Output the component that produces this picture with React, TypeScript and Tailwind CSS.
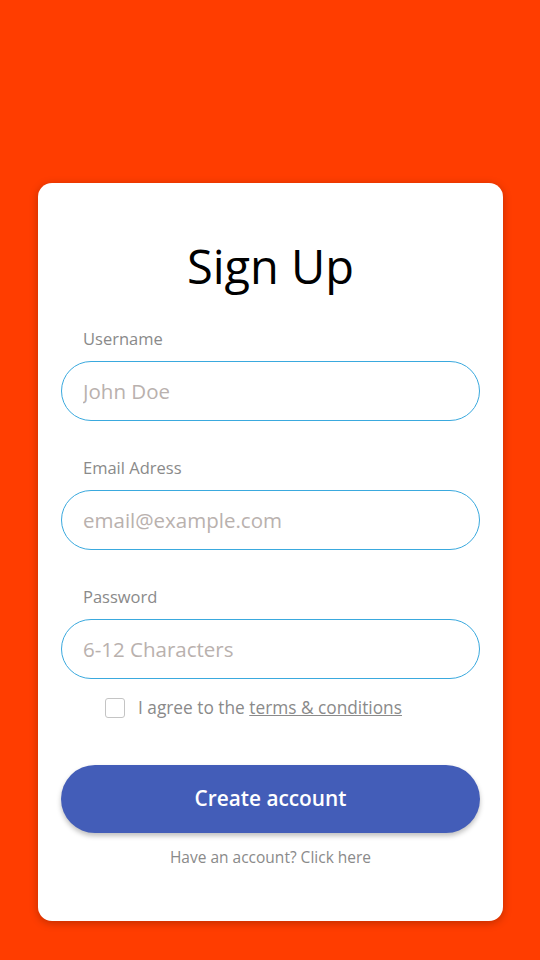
import { useState } from "react";

const font = { fontFamily: '"Open Sans", "Noto Sans", sans-serif' };

function Field({ label, placeholder, type = "text", first = false }: { label: string; placeholder: string; type?: string; first?: boolean }) {
  return (
    <div className={first ? "" : "mt-[36px]"}>
      <label className="block pl-[22px] text-[16.5px] leading-[22px] text-[#8a8a8a]">{label}</label>
      <input
        type={type}
        placeholder={placeholder}
        className="mt-[11px] block h-[60px] w-full rounded-full border-[1.5px] border-[#3aa9de] bg-white px-[21px] text-[20.5px] text-[#555] outline-none placeholder:text-[#b9b1ae]"
      />
    </div>
  );
}

export default function App() {
  const [agree, setAgree] = useState(false);
  return (
    <div className="flex h-[960px] w-[540px] items-start justify-center bg-[#ff3d00] pl-[1px] pt-[183px]" style={font}>
      <div className="w-[465px] rounded-[14px] bg-white px-[23px] pb-[52px] pt-[53px] shadow-[0_2px_8px_rgba(0,0,0,0.25)]">
        <h1 className="text-center text-[47px] leading-[60px] text-black">Sign Up</h1>
        <div className="mt-[32px]">
          <Field first label="Username" placeholder="John Doe" />
          <Field label="Email Adress" placeholder="email@example.com" type="email" />
          <Field label="Password" placeholder="6-12 Characters" type="password" />
        </div>
        <label className="mt-[16px] flex items-center pl-[44px] text-[17.3px] text-[#8a8a8a]">
          <input
            type="checkbox"
            checked={agree}
            onChange={() => setAgree(!agree)}
            className="h-[20px] w-[20px] appearance-none rounded-[3px] border-[1.5px] border-[#c4c4c4] bg-white"
          />
          <span className="ml-[13px]">
            I agree to the <a className="underline">terms &amp; conditions</a>
          </span>
        </label>
        <button className="mt-[44px] block h-[68px] w-full rounded-full bg-[#435db8] text-[20.8px] font-semibold text-white shadow-[0_3px_5px_rgba(0,0,0,0.25)]">
          Create account
        </button>
        <p className="mt-[13px] text-center text-[15.5px] text-[#8a8a8a]">Have an account? Click here</p>
      </div>
    </div>
  );
}
